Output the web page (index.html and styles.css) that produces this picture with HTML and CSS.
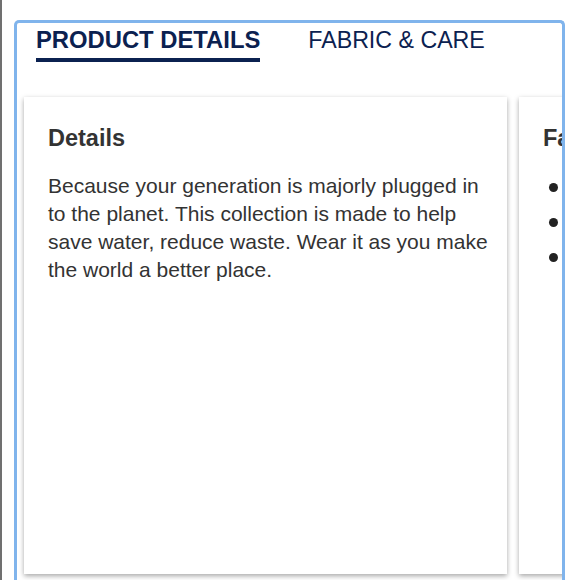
FILE: index.html
```html
<!DOCTYPE html>
<html lang="en">
<head>
<meta charset="utf-8">
<title>Product Details</title>
<link rel="stylesheet" href="styles.css">
</head>
<body>
<div class="page">
  <div class="frame">
    <div class="tabs">
      <div class="tab active">PRODUCT DETAILS</div>
      <div class="tab">FABRIC &amp; CARE</div>
    </div>
    <div class="cards">
      <div class="card">
        <h2 class="card-title">Details</h2>
        <p class="card-text">Because your generation is majorly plugged in to the planet. This collection is made to help save water, reduce waste. Wear it as you make the world a better place.</p>
      </div>
      <div class="card">
        <h2 class="card-title">Fabric &amp; Care</h2>
        <ul class="care-list">
          <li>100% cotton</li>
          <li>Machine wash cold</li>
          <li>Tumble dry low</li>
        </ul>
      </div>
    </div>
  </div>
</div>
</body>
</html>
```
FILE: styles.css
```css
html, body {
  margin: 0;
  padding: 0;
  background: #ffffff;
  height: 100%;
  overflow: hidden;
}
.page {
  border-left: 2px solid #707070;
  padding: 20px 0 0 12px;
  height: 600px;
  font-family: "Liberation Sans", Arial, Helvetica, sans-serif;
}
.frame {
  width: 545px;
  height: 600px;
  border: 3px solid #80b4ec;
  border-bottom: none;
  border-radius: 5px 5px 0 0;
  overflow: hidden;
  background: #ffffff;
}
.tabs {
  display: flex;
  gap: 48px;
  padding-left: 19px;
}
.tab {
  font-size: 23.2px;
  line-height: 28px;
  color: #0b2150;
  padding: 3px 0 4px;
  border-bottom: 4px solid transparent;
}
.tab.active {
  font-size: 23.8px;
  font-weight: bold;
  border-bottom-color: #0b2150;
}
.cards {
  display: flex;
  gap: 12px;
  padding: 35px 0 0 7px;
}
.card {
  flex: 0 0 483px;
  height: 477px;
  box-sizing: border-box;
  padding: 27px 12px 0 24px;
  background: #ffffff;
  box-shadow: 0 2px 5px rgba(0, 0, 0, 0.35);
  color: #333333;
}
.card-title {
  margin: 0 0 20px;
  font-size: 23.5px;
  line-height: 28px;
  font-weight: bold;
  white-space: nowrap;
}
.card-text {
  margin: 0;
  font-size: 21px;
  line-height: 28px;
}
.care-list {
  list-style: none;
  margin: 0;
  padding: 0;
  font-size: 21px;
  line-height: 28px;
}
.care-list li {
  display: flex;
  align-items: center;
  gap: 12px;
  padding-left: 6px;
  margin-bottom: 7px;
  white-space: nowrap;
}
.care-list li::before {
  content: "";
  width: 9px;
  height: 9px;
  border-radius: 50%;
  background: #222222;
  flex: 0 0 9px;
  margin-top: 2px;
}
```
